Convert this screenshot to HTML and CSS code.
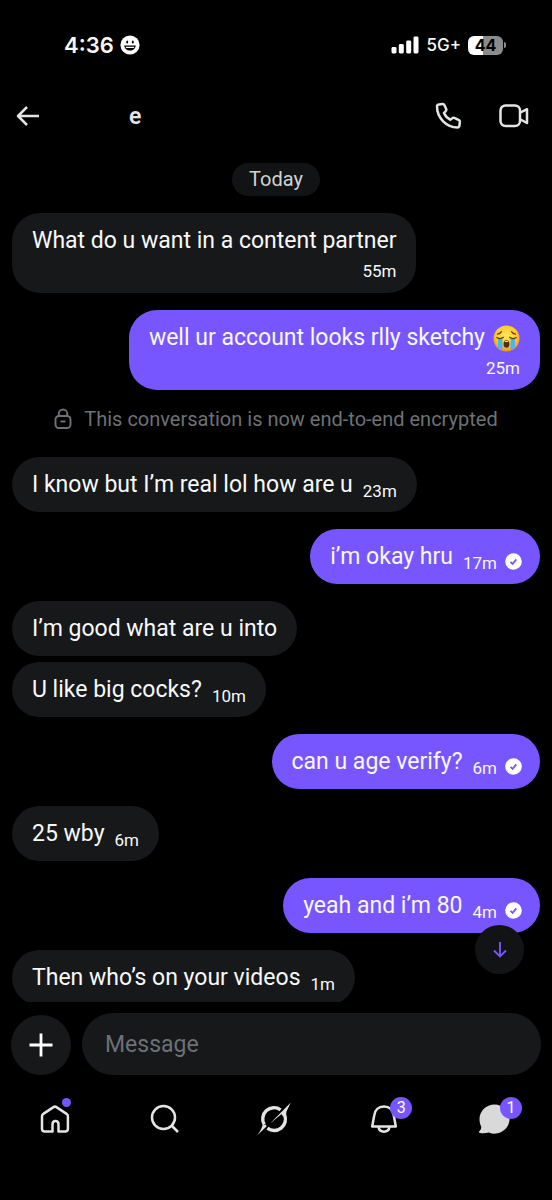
FILE: index.html
```html
<!DOCTYPE html>
<html lang="en">
<head>
<meta charset="utf-8">
<meta name="viewport" content="width=device-width, initial-scale=1">
<title>Messages</title>
<link rel="stylesheet" href="styles.css">
</head>
<body>
<div class="app">
  <div class="status">
    <div class="status-time">
      <span>4:36</span>
      <svg width="20" height="20" viewBox="0 0 20 20" aria-hidden="true"><circle cx="10" cy="10" r="9.6" fill="#fff"/><ellipse cx="7.2" cy="7" rx="1" ry="1.5"/><ellipse cx="12.8" cy="7" rx="1" ry="1.5"/><path d="M4.2 10.6h11.6c-.3 3-2.700 5-5.800 5s-5.500-2-5.800-5z"/><path d="M5.600 11.700h8.800l-.5 1.300H6.100z" fill="#fff"/></svg>
    </div>
    <div class="status-net">
      <svg width="28" height="18" viewBox="0 0 28 18" fill="#fff" aria-hidden="true"><rect x="0.500" y="11" width="5" height="6.500" rx="1.400"/><rect x="7.800" y="8" width="5" height="9.500" rx="1.400"/><rect x="15.200" y="4.500" width="5" height="13" rx="1.400"/><rect x="22.500" y="0.500" width="5" height="17" rx="1.400"/></svg>
      <span>5G+</span>
      <div class="battery"><span class="battery-body">44</span><span class="battery-tip"></span></div>
    </div>
  </div>

  <header class="header">
    <button class="icon-btn" aria-label="Back"><svg width="24" height="22" viewBox="0 0 24 22" class="line"><path d="M11 2 2 11l9 9M2 11h21"/></svg></button>
    <h1 class="name">e</h1>
    <button class="icon-btn" aria-label="Call"><svg width="27" height="28" viewBox="0 0 27 28" class="line"><path d="M3.800 2.600 7.600 2c.7-.1 1.300.2 1.600.8l2 4.200c.3.6.2 1.200-.2 1.700L9 11c1.200 2.900 3.100 5 6.200 6.700l2.500-1.700c.5-.4 1.100-.4 1.700-.1l4.600 2.300c.6.3.9.9.9 1.500l-.5 4c-.1 1-.9 1.700-1.900 1.700C11.500 25.400 2 16 2 4.600c0-1 .8-1.900 1.800-2z"/></svg></button>
    <button class="icon-btn" aria-label="Video call"><svg width="30" height="24" viewBox="0 0 30 24" class="line"><rect x="1.500" y="1.500" width="19.500" height="20.500" rx="5"/><path d="m21.500 8.500 6.500-3.300v13.800l-6.500-3.500"/></svg></button>
  </header>

  <main class="chat">
    <div class="day">Today</div>
    <div class="msg stacked"><span>What do u want in a content partner</span><time>55m</time></div>
    <div class="msg mine stacked"><span class="with-emoji">well ur account looks rlly sketchy <svg role="img" aria-label="Loudly crying face" width="27" height="27" viewBox="0 0 27 27"><defs><radialGradient id="face" cx=".5" cy=".4" r=".6"><stop offset="0" stop-color="#ffe65c"/><stop offset=".65" stop-color="#fdca31"/><stop offset="1" stop-color="#ee901c"/></radialGradient></defs><circle cx="13.500" cy="13.500" r="13" fill="url(#face)"/><path d="M5 13.500h4.500V25c-2-.6-3.200-1.500-4.500-2.700zM17.500 13.500H22v8.800c-1.300 1.200-2.500 2.100-4.500 2.700z" fill="#4eb5e8"/><path d="M3.800 12.500c2 1.300 4.800 1.300 6.700-.2M16.500 12.300c2 1.500 4.700 1.500 6.700.2M4.500 9.200c1.600-.2 3-1 4-2.500M22.500 9.200c-1.600-.2-3-1-4-2.500" fill="none" stroke="#6b3b0b" stroke-width="1.200" stroke-linecap="round"/><ellipse cx="13.500" cy="19" rx="3" ry="3.800" fill="#5e2a10"/><path d="M11.300 17c1-1.500 3.400-1.500 4.400 0z" fill="#fff"/></svg></span><time>25m</time></div>
    <div class="notice"><svg width="18" height="22" viewBox="0 0 18 22" fill="none" stroke="#6d7175" stroke-width="1.900" aria-hidden="true"><rect x="1.500" y="8" width="15" height="12" rx="3.500"/><path d="M4.800 8V5.700a4.200 4.200 0 0 1 8.400 0V8M6.500 13.500h5"/></svg><span>This conversation is now end-to-end encrypted</span></div>
    <div class="msg"><span>I know but I’m real lol how are u</span><time>23m</time></div>
    <div class="msg mine"><span>i’m okay hru</span><time>17m</time><svg class="tick" width="17" height="17" viewBox="0 0 17 17" role="img" aria-label="Sent"><circle cx="8.500" cy="8.500" r="8.300" fill="#fff"/><path d="m5.500 8.900 2.100 2 3.700-4.500" fill="none" stroke="#7856ff" stroke-width="1.700"/></svg></div>
    <div class="msg close"><span>I’m good what are u into</span></div>
    <div class="msg"><span>U like big cocks?</span><time>10m</time></div>
    <div class="msg mine"><span>can u age verify?</span><time>6m</time><svg class="tick" width="17" height="17" viewBox="0 0 17 17" role="img" aria-label="Sent"><circle cx="8.500" cy="8.500" r="8.300" fill="#fff"/><path d="m5.500 8.900 2.100 2 3.700-4.500" fill="none" stroke="#7856ff" stroke-width="1.700"/></svg></div>
    <div class="msg"><span>25 wby</span><time>6m</time></div>
    <div class="msg mine"><span>yeah and i’m 80</span><time>4m</time><svg class="tick" width="17" height="17" viewBox="0 0 17 17" role="img" aria-label="Sent"><circle cx="8.500" cy="8.500" r="8.300" fill="#fff"/><path d="m5.500 8.900 2.100 2 3.700-4.500" fill="none" stroke="#7856ff" stroke-width="1.700"/></svg></div>
    <div class="msg"><span>Then who’s on your videos</span><time>1m</time></div>
    <button class="jump" aria-label="Scroll to latest"><svg width="14" height="16" viewBox="0 0 14 16" fill="none" stroke="#7856ff" stroke-width="1.900"><path d="M7 0v14.500M1 8.500l6 6 6-6"/></svg></button>
  </main>

  <form class="composer">
    <button type="button" class="plus" aria-label="Add attachment"><svg width="24" height="24" viewBox="0 0 24 24" fill="none" stroke="#fff" stroke-width="2.800"><path d="M12 .5v23M.5 12h23"/></svg></button>
    <input class="field" type="text" placeholder="Message" aria-label="Message">
  </form>

  <nav class="tabs">
    <a href="#" class="tab" aria-label="Home"><svg width="30" height="30" viewBox="0 0 30 30" class="line"><path d="M12.500 27.500H4.800c-1.600 0-2.800-1.200-2.800-2.800V12.200c0-1 .5-1.800 1.300-2.300l10.200-6.800c.9-.6 2-.6 2.900 0l10.200 6.800c.8.500 1.300 1.300 1.300 2.300v12.500c0 1.600-1.200 2.800-2.800 2.800h-6.600v-7.200c0-4.500-6-4.500-6 0z"/></svg><span class="dot"></span></a>
    <a href="#" class="tab" aria-label="Search"><svg width="30" height="30" viewBox="0 0 30 30" class="line"><circle cx="13.500" cy="13.500" r="11.500"/><path d="m21.500 21.500 6.500 6.500"/></svg></a>
    <a href="#" class="tab" aria-label="Grok"><svg width="36" height="34" viewBox="0 0 36 34"><g fill="none" stroke="#e2e4e5" stroke-width="3.400"><path d="M24.600 7.800A11.300 11.300 0 0 0 8.200 22.600"/><path d="M11.400 26.200A11.300 11.300 0 0 0 28.600 12.800"/></g><path d="M14 21.500 34.800.5c-1.500 3.200-3 6-4.500 9.500l-.2 3.500-3.300.8-1.200-2.300zM6.600 23.200l3.400-.6.5 2L1 33.500c2.400-3 4.400-6.300 5.600-10.300z" fill="#e2e4e5"/></svg></a>
    <a href="#" class="tab" aria-label="Notifications, 3 new"><svg width="28" height="30" viewBox="0 0 28 30" class="line"><path d="M2.200 22.500 4.200 11.500C4.800 6 8.700 2.500 14 2.500s9.200 3.500 9.800 9l2 11z"/><path d="M8.500 23c1 6.200 10 6.200 11 0"/></svg><span class="badge">3</span></a>
    <a href="#" class="tab" aria-label="Messages, 1 new"><svg width="32" height="32" viewBox="0 0 32 32"><path d="M16.500 1.500c8.300 0 15 6.500 15 14.600S24.800 30.700 16.500 30.700c-2 0-3.800-.4-5.500-1.200-2.500.7-5.600 1.100-9 .6-1-.1-1.300-1.300-.6-2 1.500-1.300 2-2.900 1.800-4.600-1.200-2.200-1.700-4.700-1.700-7.400 0-8.100 6.700-14.600 15-14.600z" fill="#d9d9d9"/></svg><span class="badge">1</span></a>
  </nav>
</div>
</body>
</html>
```
FILE: styles.css
```css
* {
  box-sizing: border-box;
}

body {
  margin: 0;
  background: #000;
  color: #f7f9f9;
  font-family: Roboto, "Liberation Sans", sans-serif;
}

button {
  border: 0;
  padding: 0;
  background: none;
  color: inherit;
}

svg {
  display: block;
  flex: none;
}

.line {
  fill: none;
  stroke: #e2e4e5;
  stroke-width: 2.5;
  stroke-linejoin: round;
}

.app {
  display: flex;
  flex-direction: column;
  height: 100vh;
}

.status {
  display: flex;
  align-items: center;
  justify-content: space-between;
  padding: 0 46px 0 64px;
  height: 90px;
  flex: none;
}

.status-time,
.status-net {
  display: flex;
  align-items: center;
  gap: 6px;
  font-family: Inter, sans-serif;
}

.status-time {
  font-size: 22px;
  font-weight: 600;
}

.status-net {
  gap: 7px;
  font-size: 17px;
  font-weight: 500;
}

.battery {
  display: flex;
  align-items: center;
  gap: 1px;
}

.battery-body {
  width: 35px;
  border-radius: 6px;
  background: linear-gradient(90deg, #fff 44%, #8b8b8b 44%);
  color: #000;
  font-size: 16px;
  font-weight: 700;
  line-height: 19px;
  text-align: center;
}

.battery-tip {
  width: 2px;
  height: 6px;
  border-radius: 0 2px 2px 0;
  background: #8b8b8b;
}

.header {
  display: flex;
  align-items: center;
  height: 52px;
  padding: 0 23px 0 16px;
  flex: none;
}

.name {
  flex: 1;
  margin: 0 0 0 89px;
  color: #e2e4e5;
  font-size: 23px;
  font-weight: 600;
}

.header .icon-btn + .icon-btn {
  margin-left: 37px;
}

.chat {
  position: relative;
  display: flex;
  flex: 1;
  flex-direction: column;
  align-items: flex-start;
  gap: 17px;
  min-height: 0;
  margin-bottom: 11px;
  padding: 21px 12px 0;
  overflow: hidden;
}

.chat > * {
  flex: none;
}

.day {
  align-self: center;
  padding: 0 17px;
  border-radius: 17px;
  background: #121314;
  color: #d0d2d3;
  font-size: 20px;
  line-height: 33px;
}

.msg {
  display: flex;
  align-items: flex-end;
  padding: 12px 20px 11px;
  border-radius: 28px;
  background: #16181a;
  font-size: 23px;
  line-height: 32px;
}

.msg time {
  margin-left: 10px;
  font-size: 17px;
  line-height: 20px;
}

.mine {
  align-self: flex-end;
  background: #7856ff;
}

.tick {
  margin: 0 -2px 3px 8px;
}

.stacked {
  flex-direction: column;
  padding-bottom: 8px;
}

.stacked time {
  line-height: 28px;
}

.with-emoji {
  display: flex;
  align-items: center;
  gap: 8px;
}

.close {
  margin-bottom: -11px;
}

.notice {
  display: flex;
  align-items: center;
  align-self: center;
  gap: 12px;
  margin-bottom: 9px;
  color: #6d7175;
  font-size: 20px;
  line-height: 24px;
}

.jump {
  position: absolute;
  right: 28px;
  bottom: 28px;
  display: grid;
  place-items: center;
  width: 49px;
  height: 49px;
  border-radius: 50%;
  background: #121314;
}

.composer {
  display: flex;
  align-items: flex-end;
  gap: 11px;
  padding: 0 11px;
  flex: none;
}

.plus {
  display: grid;
  place-items: center;
  flex: none;
  width: 60px;
  height: 60px;
  border-radius: 50%;
  background: #16181a;
}

.field {
  flex: 1;
  min-width: 0;
  height: 62px;
  padding: 0 23px;
  border: 0;
  border-radius: 31px;
  outline: 0;
  background: #16181a;
  color: #f7f9f9;
  font: 23px Roboto, sans-serif;
}

.field::placeholder {
  color: #6d7175;
}

.tabs {
  display: flex;
  height: 125px;
  padding: 27px 3px 0 0;
  flex: none;
}

.tab {
  position: relative;
  display: flex;
  flex: 1;
  align-items: center;
  justify-content: center;
  height: 34px;
}

.dot,
.badge {
  position: absolute;
  left: 50%;
  border-radius: 50%;
  background: #7856ff;
}

.dot {
  top: -4px;
  width: 9px;
  height: 9px;
  margin-left: 7px;
}

.badge {
  top: -5px;
  width: 22px;
  height: 22px;
  margin-left: 6px;
  color: #fff;
  font-size: 16px;
  line-height: 22px;
  text-align: center;
}
```
